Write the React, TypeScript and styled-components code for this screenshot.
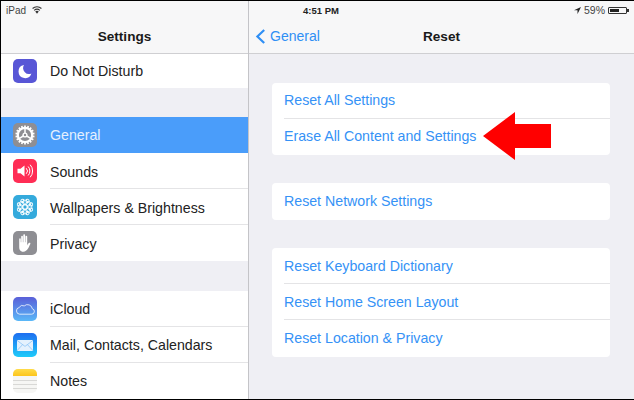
import React from "react";
import styled, { createGlobalStyle } from "styled-components";

const GlobalStyle = createGlobalStyle`
  html, body {
    margin: 0;
    padding: 0;
    background: #000;
  }
  * {
    box-sizing: border-box;
  }
`;

const MoonIcon = () => (
  <svg width="24" height="24" viewBox="0 0 24 24">
    <rect width="24" height="24" rx="5" fill="#5856d6" />
    <path d="M11 6a6.6 6.6 0 1 0 7.4 8.6 6 6 0 0 1-7.4-8.6z" fill="#fff" />
  </svg>
);

const teeth = Array.from({ length: 18 }, (_, i) => i * 20);

const GearIcon = () => (
  <svg width="24" height="24" viewBox="0 0 24 24">
    <rect width="24" height="24" rx="5" fill="#8e8e93" />
    <g stroke="#fff" fill="none">
      <circle cx="12" cy="12" r="7.2" strokeWidth="2.2" />
      <circle cx="12" cy="12" r="1.9" strokeWidth="1.4" />
      {teeth.map((a) => (
        <path key={a} d="M12 2.4v2.6" strokeWidth="1.7" transform={`rotate(${a} 12 12)`} />
      ))}
      <path d="M12 10V5.5M13.7 13l3.9 2.3M10.3 13l-3.9 2.3" strokeWidth="1.5" />
    </g>
  </svg>
);

const SoundIcon = () => (
  <svg width="24" height="24" viewBox="0 0 24 24">
    <rect width="24" height="24" rx="5" fill="#ff2d55" />
    <path d="M4.5 9.8h3l4-3.3v11l-4-3.3h-3z" fill="#fff" />
    <g stroke="#fff" strokeWidth="1" fill="none" strokeLinecap="round">
      <path d="M13.5 9.5a3.6 3.6 0 0 1 0 5" />
      <path d="M15.4 7.8a6.2 6.2 0 0 1 0 8.4" />
      <path d="M17.4 6a8.8 8.8 0 0 1 0 12" />
    </g>
  </svg>
);

const petals = [0, 45, 90, 135, 180, 225, 270, 315];

const FlowerIcon = () => (
  <svg width="24" height="24" viewBox="0 0 24 24">
    <rect width="24" height="24" rx="5" fill="#34aadc" />
    <g stroke="#fff" strokeWidth="0.9" fill="none">
      <circle cx="12" cy="12" r="2.2" />
      {petals.map((a) => (
        <circle key={a} cx="12" cy="7.4" r="2.4" transform={`rotate(${a} 12 12)`} />
      ))}
      {petals.map((a) => (
        <circle key={a} cx="12" cy="5.4" r="1.6" transform={`rotate(${a + 22.5} 12 12)`} />
      ))}
    </g>
  </svg>
);

const HandIcon = () => (
  <svg width="24" height="24" viewBox="0 0 24 24">
    <rect width="24" height="24" rx="5" fill="#8e8e93" />
    <path
      d="M6.2 8.2c0-1.2 1.6-1.2 1.6 0v3h.4V5.6c0-1.3 1.7-1.3 1.7 0v5.6h.4V4.2c0-1.3 1.8-1.3 1.8 0v7h.4V5.6c0-1.3 1.7-1.3 1.7 0v8.8c.6-1 1.2-2.2 1.9-2.6 1-.5 1.6.3 1.2 1.1-.9 1.7-1.6 3.8-2.6 5.2-1 1.4-2.3 2.6-4.3 2.6-3.4 0-4.2-2.4-4.2-5z"
      fill="#fff"
    />
  </svg>
);

const CloudIcon = () => (
  <svg width="24" height="24" viewBox="0 0 24 24">
    <defs>
      <linearGradient id="cloudBg" x1="0" y1="0" x2="0" y2="1">
        <stop offset="0" stopColor="#5a5fd8" />
        <stop offset="1" stopColor="#5ab8f8" />
      </linearGradient>
    </defs>
    <rect width="24" height="24" rx="5" fill="url(#cloudBg)" />
    <path
      d="M6.6 17.2a3.4 3.4 0 0 1-.5-6.7 4 4 0 0 1 5.2-1.6 4.8 4.8 0 0 1 8 2.8 2.8 2.8 0 0 1-.8 5.5z"
      fill="none"
      stroke="#fff"
      strokeOpacity="0.85"
      strokeWidth="0.9"
    />
  </svg>
);

const MailIcon = () => (
  <svg width="24" height="24" viewBox="0 0 24 24">
    <defs>
      <linearGradient id="mailBg" x1="0" y1="0" x2="0" y2="1">
        <stop offset="0" stopColor="#1e6ef0" />
        <stop offset="1" stopColor="#1ecbfa" />
      </linearGradient>
    </defs>
    <rect width="24" height="24" rx="5" fill="url(#mailBg)" />
    <rect x="4" y="7" width="16" height="11" rx="1" fill="#e4f1fd" />
    <path d="M4 7.4l8 6 8-6M4 17.6l5.6-6M20 17.6l-5.6-6" fill="none" stroke="#8cc4f6" strokeWidth="0.8" />
  </svg>
);

const NotesIcon = () => (
  <svg width="24" height="24" viewBox="0 0 24 24">
    <defs>
      <linearGradient id="notesTop" x1="0" y1="0" x2="0" y2="1">
        <stop offset="0" stopColor="#ffdc4a" />
        <stop offset="1" stopColor="#fcc51c" />
      </linearGradient>
      <clipPath id="notesClip">
        <rect width="24" height="24" rx="5" />
      </clipPath>
    </defs>
    <g clipPath="url(#notesClip)">
      <rect width="24" height="24" fill="#f6f6f4" />
      <rect width="24" height="7" fill="url(#notesTop)" />
      <path d="M0 11.5h24M0 15.5h24M0 19.5h24" stroke="#d8d8d6" strokeWidth="1" />
    </g>
  </svg>
);

const WifiIcon = () => (
  <svg width="10" height="8" viewBox="0 0 12 9">
    <path d="M6 9L3.9 6.4a3.2 3.2 0 0 1 4.2 0z" fill="#333" />
    <path d="M2.6 4.9a5.2 5.2 0 0 1 6.8 0M.7 2.7a8 8 0 0 1 10.6 0" fill="none" stroke="#333" strokeWidth="1.3" />
  </svg>
);

const LocationIcon = () => (
  <svg width="7" height="7" viewBox="0 0 8 8">
    <path d="M8 0L0 3.6h4V8z" fill="#222" />
  </svg>
);

const BackChevron = () => (
  <svg width="11" height="15" viewBox="0 0 11 15">
    <path d="M9.2 1L2.4 7.5l6.8 6.5" fill="none" stroke="#2f8ff5" strokeWidth="2.2" />
  </svg>
);

const Screen = styled.div`
  width: 634px;
  height: 400px;
  padding: 1px 0 1px 1px;
  overflow: hidden;
  display: flex;
  background: #000;
  font-family: "Liberation Sans", Arial, sans-serif;
`;

const Sidebar = styled.aside`
  width: 248px;
  flex: none;
  background: #efeff4;
  border-right: 1px solid #c4c4c8;
  display: flex;
  flex-direction: column;
`;

const Detail = styled.main`
  flex: 1;
  position: relative;
  background: #efeff4;
  display: flex;
  flex-direction: column;
`;

const Header = styled.header`
  height: 53px;
  flex: none;
  background: #f7f7f8;
  border-bottom: 1px solid #cfcfd2;
  display: flex;
  flex-direction: column;
`;

const StatusBar = styled.div`
  height: 18px;
  padding: 0 5px;
  display: flex;
  align-items: center;
  justify-content: space-between;
  font-size: 10px;
  color: #444;
`;

const StatusLeft = styled.div`
  display: flex;
  align-items: center;
  gap: 6px;
`;

const StatusRight = styled.div`
  display: flex;
  align-items: center;
  gap: 3px;
  font-size: 10.5px;
`;

const Clock = styled.span`
  margin-left: 49px;
  font-size: 9.5px;
  font-weight: 700;
  color: #222;
`;

const Battery = styled.span`
  width: 19px;
  height: 7px;
  margin-right: 2px;
  border: 1px solid #333;
  border-radius: 1px;
  padding: 1px;
  display: block;
  position: relative;

  &::after {
    content: "";
    position: absolute;
    right: -3px;
    top: 1px;
    width: 2px;
    height: 3px;
    background: #333;
  }
`;

const BatteryFill = styled.span`
  display: block;
  height: 100%;
  background: #222;
`;

const NavBar = styled.div`
  flex: 1;
  display: grid;
  grid-template-columns: 1fr auto 1fr;
  align-items: center;
`;

const NavTitle = styled.h1`
  grid-column: 2;
  margin: 0;
  font-size: 13.6px;
  font-weight: 700;
  color: #1a1a1a;
`;

const BackLink = styled.div`
  grid-column: 1;
  display: flex;
  align-items: center;
  gap: 4px;
  padding-left: 6px;
  color: #2f8ff5;
  font-size: 14px;
`;

const SettingsList = styled.div`
  flex: 1;
  display: flex;
  flex-direction: column;
  overflow: hidden;
`;

const Group = styled.div<{ $gap?: number }>`
  background: #fff;
  margin-top: ${(p) => p.$gap ?? 0}px;
`;

const Row = styled.div<{ $active?: boolean; $height?: number }>`
  height: ${(p) => p.$height ?? 36}px;
  display: flex;
  align-items: center;
  gap: 13px;
  padding-left: 12px;
  background: ${(p) => (p.$active ? "#4a9dfa" : "#fff")};
`;

const RowLabel = styled.div<{ $active?: boolean; $divider?: boolean; $drop?: boolean }>`
  flex: 1;
  height: 100%;
  display: flex;
  align-items: center;
  padding-top: ${(p) => (p.$drop ? 2 : 0)}px;
  font-size: 14.2px;
  color: ${(p) => (p.$active ? "#e4f0fe" : "#222")};
  border-bottom: ${(p) => (p.$divider ? "1px solid #e4e4e6" : "none")};
`;

const IconBox = styled.span`
  width: 24px;
  height: 24px;
  flex: none;
  display: block;

  svg {
    display: block;
  }
`;

const ResetBody = styled.div`
  padding: 29px 24px 0 23px;
  display: flex;
  flex-direction: column;
  gap: 28px;
`;

const Card = styled.div<{ $bottom?: number }>`
  background: #fff;
  border-radius: 4px;
  padding-left: 12px;
  padding-bottom: ${(p) => p.$bottom ?? 0}px;
`;

const CardRow = styled.div<{ $divider?: boolean; $lift?: boolean }>`
  height: 36px;
  display: flex;
  align-items: center;
  padding-bottom: ${(p) => (p.$lift ? 2 : 0)}px;
  font-size: 14.2px;
  color: #3592f6;
  border-bottom: ${(p) => (p.$divider ? "1px solid #e4e4e6" : "none")};
`;

const RedArrow = styled.svg`
  position: absolute;
  left: 234px;
  top: 111px;
`;

const App = () => {
  return (
    <>
      <GlobalStyle />
      <Screen>
        <Sidebar>
          <Header>
            <StatusBar>
              <StatusLeft>
                iPad <WifiIcon />
              </StatusLeft>
            </StatusBar>
            <NavBar>
              <NavTitle>Settings</NavTitle>
            </NavBar>
          </Header>
          <SettingsList>
            <Group>
              <Row $height={34}>
                <IconBox><MoonIcon /></IconBox>
                <RowLabel>Do Not Disturb</RowLabel>
              </Row>
            </Group>
            <Group $gap={29}>
              <Row $active>
                <IconBox><GearIcon /></IconBox>
                <RowLabel $active>General</RowLabel>
              </Row>
              <Row>
                <IconBox><SoundIcon /></IconBox>
                <RowLabel $divider $drop>Sounds</RowLabel>
              </Row>
              <Row>
                <IconBox><FlowerIcon /></IconBox>
                <RowLabel $divider $drop>Wallpapers &amp; Brightness</RowLabel>
              </Row>
              <Row>
                <IconBox><HandIcon /></IconBox>
                <RowLabel $drop>Privacy</RowLabel>
              </Row>
            </Group>
            <Group $gap={30}>
              <Row>
                <IconBox><CloudIcon /></IconBox>
                <RowLabel $divider>iCloud</RowLabel>
              </Row>
              <Row>
                <IconBox><MailIcon /></IconBox>
                <RowLabel $divider>Mail, Contacts, Calendars</RowLabel>
              </Row>
              <Row>
                <IconBox><NotesIcon /></IconBox>
                <RowLabel>Notes</RowLabel>
              </Row>
            </Group>
          </SettingsList>
        </Sidebar>
        <Detail>
          <Header>
            <StatusBar>
              <Clock>4:51 PM</Clock>
              <StatusRight>
                <LocationIcon />
                59%
                <Battery><BatteryFill style={{ width: "59%" }} /></Battery>
              </StatusRight>
            </StatusBar>
            <NavBar>
              <BackLink>
                <BackChevron />
                General
              </BackLink>
              <NavTitle>Reset</NavTitle>
            </NavBar>
          </Header>
          <ResetBody>
            <Card>
              <CardRow $divider $lift>Reset All Settings</CardRow>
              <CardRow $lift>Erase All Content and Settings</CardRow>
            </Card>
            <Card $bottom={1}>
              <CardRow>Reset Network Settings</CardRow>
            </Card>
            <Card $bottom={1}>
              <CardRow $divider>Reset Keyboard Dictionary</CardRow>
              <CardRow $divider>Reset Home Screen Layout</CardRow>
              <CardRow>Reset Location &amp; Privacy</CardRow>
            </Card>
          </ResetBody>
          <RedArrow width="68" height="48" viewBox="0 0 68 48">
            <path d="M0 24L32 0v12h36v24H32v12z" fill="#ff0000" />
          </RedArrow>
        </Detail>
      </Screen>
    </>
  );
};

export default App;
